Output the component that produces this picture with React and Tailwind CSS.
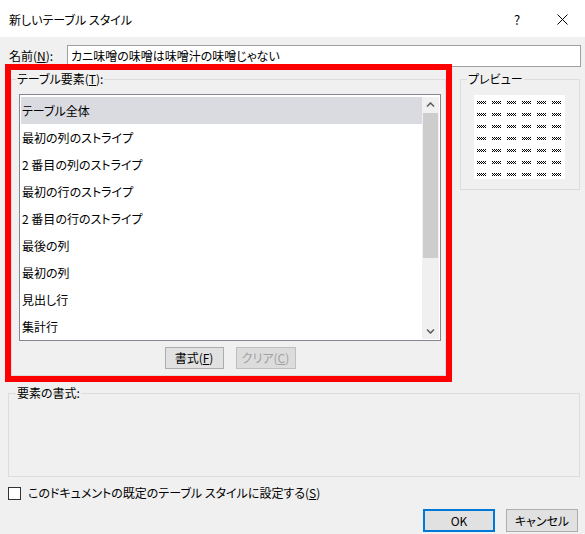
import React from "react";

const items = [
  "テーブル全体",
  "最初の列のストライプ",
  "2 番目の列のストライプ",
  "最初の行のストライプ",
  "2 番目の行のストライプ",
  "最後の列",
  "最初の列",
  "見出し行",
  "集計行",
];

function Dots() {
  const rects = [];
  for (let y = 0; y < 3; y++) {
    for (let x = y % 2; x < 9; x += 2) {
      rects.push(<rect key={`${x}-${y}`} x={x} y={y} width="1" height="1" fill="#000" />);
    }
  }
  return (
    <svg width="9" height="3" viewBox="0 0 9 3" shapeRendering="crispEdges">
      {rects}
    </svg>
  );
}

function Chevron({ down }) {
  return (
    <svg width="9" height="6" viewBox="0 0 9 6">
      <path
        d={down ? "M1 1.5 L4.5 5 L8 1.5" : "M1 4.5 L4.5 1 L8 4.5"}
        fill="none"
        stroke="#606060"
        strokeWidth="1.6"
      />
    </svg>
  );
}

export default function App() {
  const cells = [];
  for (let i = 0; i < 42; i++) {
    cells.push(
      <div key={i} className="flex items-start">
        <Dots />
      </div>
    );
  }
  return (
    <div className="relative w-[585px] h-[534px] overflow-hidden bg-[#f0f0f0] text-[12px] text-black font-['Noto_Sans_CJK_JP','Noto_Sans',sans-serif] [font-feature-settings:'palt']">
      {/* title bar */}
      <div className="flex h-[37px] items-center bg-white">
        <div className="pl-[9px] pt-[2px] leading-[16px]">新しいテーブル スタイル</div>
        <div className="ml-auto flex h-full">
          <div className="flex w-[46px] items-center justify-center pt-[2px] text-[13px]">?</div>
          <div className="flex w-[45px] items-center justify-center pt-[2px]">
            <svg width="11" height="11" viewBox="0 0 11 11">
              <path d="M0.5 0.5 L10.5 10.5 M10.5 0.5 L0.5 10.5" stroke="#000" strokeWidth="1" />
            </svg>
          </div>
        </div>
      </div>

      {/* name row */}
      <div className="mt-[8px] flex items-center">
        <div className="w-[67px] pl-[9px] leading-[16px]">
          名前(<span className="underline">N</span>):
        </div>
        <div className="flex h-[22px] w-[514px] items-center border border-[#a0a0a0] bg-white pl-[3px] leading-[16px]">
          カニ味噌の味噌は味噌汁の味噌じゃない
        </div>
      </div>

      {/* main row */}
      <div className="mt-[4px] flex">
        <fieldset className="ml-[11px] h-[305px] w-[435px] border border-[#dcdcdc]">
          <legend className="ml-[4px] px-[1px] leading-[16px]">
            テーブル要素(<span className="underline">T</span>):
          </legend>
          <div className="ml-[7px] mt-[7px] flex h-[247px] w-[422px] border border-[#828790] bg-white pt-[2px] pb-[1px] pl-[1px] pr-[1px]">
            <div className="flex-1">
              {items.map((t, i) => (
                <div
                  key={t}
                  className={`flex h-[27px] items-center pl-[1px] leading-[16px] ${i === 0 ? "bg-[#dadbe0]" : ""}`}
                >
                  {t}
                </div>
              ))}
            </div>
            <div className="flex w-[17px] flex-col bg-[#f0f0f0]">
              <div className="flex h-[16px] items-center justify-center">
                <Chevron />
              </div>
              <div className="mx-auto h-[145px] w-[15px] bg-[#cdcdcd]" />
              <div className="flex-1" />
              <div className="flex h-[17px] items-center justify-center">
                <Chevron down />
              </div>
            </div>
          </div>
          <div className="ml-[7px] mt-[6px] flex w-[422px] justify-center gap-[12px]">
            <div className="flex h-[22px] w-[59px] items-center justify-center border border-[#adadad] bg-[#e1e1e1] leading-[16px]">
              書式(<span className="underline">F</span>)
            </div>
            <div className="flex h-[22px] w-[60px] items-center justify-center border border-[#bfbfbf] bg-[#dcdcdc] leading-[16px] text-[#a0a0a0]">
              クリア(<span className="underline">C</span>)
            </div>
          </div>
        </fieldset>

        <fieldset className="ml-[14px] h-[119px] w-[120px] border border-[#dcdcdc]">
          <legend className="ml-[6px] px-[1px] leading-[16px]">プレビュー</legend>
          <div className="ml-[13px] mt-[8px] grid h-[84px] w-[91px] grid-cols-[repeat(6,15px)] auto-rows-[12px] bg-white pl-[3px] pt-[6px]">
            {cells}
          </div>
        </fieldset>
      </div>

      {/* element format */}
      <fieldset className="ml-[8px] mt-[9px] h-[92px] w-[572px] border border-[#dcdcdc]">
        <legend className="ml-[7px] px-[1px] leading-[16px]">要素の書式:</legend>
      </fieldset>

      {/* checkbox */}
      <div className="mt-[8px] flex items-center pl-[8px]">
        <div className="h-[13px] w-[13px] border border-[#333333] bg-white" />
        <div className="ml-[7px] leading-[16px]">
          このドキュメントの既定のテーブル スタイルに設定する(<span className="underline">S</span>)
        </div>
      </div>

      {/* buttons */}
      <div className="mt-[8px] flex justify-end gap-[11px] pr-[7px]">
        <div className="flex h-[23px] w-[72px] items-center justify-center border-2 border-[#0078d7] bg-[#e1e1e1] leading-[16px]">
          OK
        </div>
        <div className="flex h-[23px] w-[72px] items-center justify-center border border-[#adadad] bg-[#e1e1e1] leading-[16px]">
          キャンセル
        </div>
      </div>

      {/* red annotation */}
      <div className="pointer-events-none absolute left-[5px] top-[64px] h-[318px] w-[447px] border-[6px] border-[#ff0000]" />
    </div>
  );
}
